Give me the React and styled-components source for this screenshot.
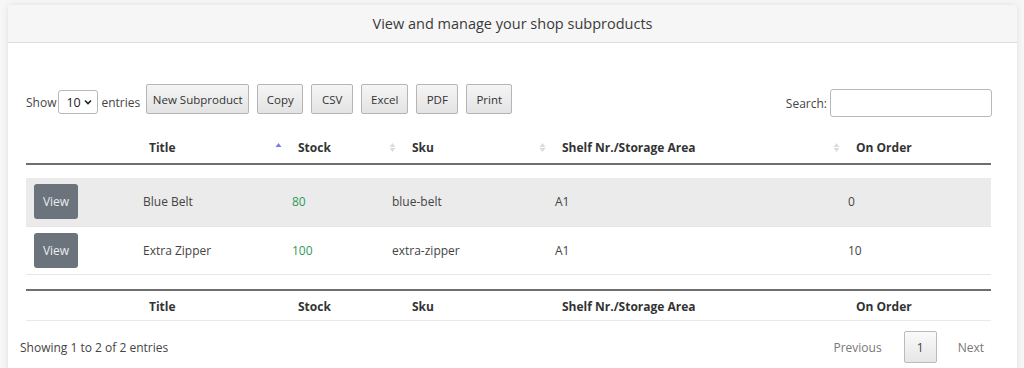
import React from "react";
import styled, { createGlobalStyle } from "styled-components";

const Global = createGlobalStyle`
  html, body { margin: 0; padding: 0; background: #f6f6f6; }
  body { font-family: "Open Sans", "Noto Sans", sans-serif; color: #444; font-size: 12px; }
  * { box-sizing: border-box; }
`;

const Page = styled.div`
  padding: 5px 7px 0 8px;
`;

const Card = styled.section`
  background: #fff;
  border-radius: 4px 4px 0 0;
  box-shadow: 0 0 6px rgba(0, 0, 0, 0.1);
  height: 400px;
`;

const CardHeader = styled.header`
  height: 38px;
  background: #f6f6f6;
  border-bottom: 1px solid #dcdcdc;
  border-radius: 4px 4px 0 0;
  display: flex;
  align-items: center;
  justify-content: center;
  font-size: 14.5px;
  color: #3a3a3a;
`;

const CardBody = styled.div`
  padding: 41px 25px 0 18px;
`;

const Controls = styled.div`
  display: flex;
  align-items: center;
  justify-content: space-between;
  height: 30px;
`;

const Left = styled.div`
  display: flex;
  align-items: center;
`;

const Label = styled.label`
  display: flex;
  align-items: center;
  font-size: 12px;
  color: #444;
  margin-top: ${(p) => p.$offset || 0}px;
`;

const Select = styled.div`
  width: 40px;
  height: 24px;
  border: 1px solid #b8b8b8;
  border-radius: 3px;
  display: flex;
  align-items: center;
  justify-content: space-between;
  padding: 0 5px 0 7px;
  margin: 0 3px 0 2px;
  background: #fff;
  color: #222;
  font-size: 12.5px;
`;

const ButtonGroup = styled.div`
  display: flex;
  gap: 8px;
  margin-left: 6px;
`;

const ToolButton = styled.button`
  width: ${(p) => p.$w}px;
  height: 30px;
  padding: 0;
  border: 1px solid #b5b5b5;
  border-radius: 2px;
  background: linear-gradient(#f5f5f5, #e3e3e3);
  font-family: "Open Sans", "Noto Sans", sans-serif;
  font-size: 11.5px;
  color: #333;
`;

const SearchInput = styled.div`
  width: 162px;
  height: 28px;
  border: 1px solid #b8b8b8;
  border-radius: 3px;
  margin-left: 3px;
  background: #fff;
`;

const TableWrap = styled.div`
  width: 965px;
`;

const Table = styled.table`
  width: 100%;
  border-collapse: collapse;
  table-layout: fixed;
`;

const HeadTable = styled(Table)`
  margin-top: 17px;
  border-bottom: 2px solid #6f6f6f;
`;

const FootTable = styled(Table)`
  margin-top: 14px;
  border-top: 2px solid #6f6f6f;
  border-bottom: 1px solid #e6eaee;
`;

const Th = styled.th`
  text-align: left;
  font-weight: 700;
  color: #333;
  font-size: 12px;
  padding: ${(p) => (p.$foot ? "2px 0 0 7px" : "0 0 0 7px")};
  height: ${(p) => p.$h || 33}px;
`;

const ThInner = styled.div`
  display: flex;
  align-items: center;
  gap: 16px;
  padding-left: ${(p) => (p.$icon ? 0 : 23)}px;
`;

const BodyTable = styled(Table)`
  margin-top: 13px;
`;

const Tr = styled.tr`
  background: ${(p) => (p.$odd ? "#ebebeb" : "#fff")};
  border-bottom: 1px solid #e4e7ea;
`;

const Td = styled.td`
  height: 48px;
  padding: 0 8px;
  font-size: 12px;
  color: ${(p) => (p.$green ? "#2f9a5a" : "#444")};
`;

const ViewButton = styled.button`
  width: 44px;
  height: 35px;
  border: none;
  border-radius: 3px;
  background: #6b737c;
  color: #e9ecef;
  font-family: "Open Sans", "Noto Sans", sans-serif;
  font-size: 12px;
  padding: 0;
`;

const Bottom = styled.div`
  display: flex;
  align-items: center;
  justify-content: space-between;
  margin: 10px 0 0 -6px;
`;

const Info = styled.div`
  font-size: 12px;
  color: #444;
`;

const Pager = styled.div`
  display: flex;
  align-items: center;
  margin-right: 8px;
`;

const PageLink = styled.span`
  font-size: 12px;
  color: #777;
`;

const PageCurrent = styled.span`
  width: 33px;
  height: 32px;
  display: flex;
  align-items: center;
  justify-content: center;
  border: 1px solid #bbb;
  border-radius: 2px;
  background: linear-gradient(#fafafa, #e6e6e6);
  color: #444;
  font-size: 12px;
  margin: 0 21px 0 22px;
`;

const SortIcon = ({ active }) => (
  <svg width="7" height="11" viewBox="0 0 7 11">
    <polygon points="3.5,1 6.5,5 0.5,5" fill={active ? "#7a7ee0" : "#dcdcdc"} />
    {!active && <polygon points="3.5,10 6.5,6 0.5,6" fill="#dcdcdc" />}
  </svg>
);

const Chevron = () => (
  <svg width="8" height="6" viewBox="0 0 8 6">
    <path d="M1 1.5 L4 4.5 L7 1.5" fill="none" stroke="#222" strokeWidth="1.6" />
  </svg>
);

const headCols = [93, 149, 114, 150, 294, 165];
const bodyCols = [109, 149, 100, 163, 293, 151];
const headers = [
  { label: "" },
  { label: "Title" },
  { label: "Stock", sort: "active" },
  { label: "Sku", sort: "both" },
  { label: "Shelf Nr./Storage Area", sort: "both" },
  { label: "On Order", sort: "both" },
];

const rows = [
  { title: "Blue Belt", stock: "80", sku: "blue-belt", shelf: "A1", order: "0" },
  { title: "Extra Zipper", stock: "100", sku: "extra-zipper", shelf: "A1", order: "10" },
];

const buttons = [
  { label: "New Subproduct", w: 103 },
  { label: "Copy", w: 46 },
  { label: "CSV", w: 42 },
  { label: "Excel", w: 47 },
  { label: "PDF", w: 42 },
  { label: "Print", w: 46 },
];

const Cols = ({ widths }) => (
  <colgroup>
    {widths.map((w, i) => (
      <col key={i} style={{ width: w }} />
    ))}
  </colgroup>
);

export default function App() {
  return (
    <>
      <Global />
      <Page>
        <Card>
          <CardHeader>View and manage your shop subproducts</CardHeader>
          <CardBody>
            <Controls>
              <Left>
                <Label $offset={6}>
                  Show
                  <Select>
                    10 <Chevron />
                  </Select>
                  entries
                </Label>
                <ButtonGroup>
                  {buttons.map((b) => (
                    <ToolButton key={b.label} $w={b.w}>
                      {b.label}
                    </ToolButton>
                  ))}
                </ButtonGroup>
              </Left>
              <Label $offset={8}>
                Search:
                <SearchInput />
              </Label>
            </Controls>
            <TableWrap>
              <HeadTable>
                <Cols widths={headCols} />
                <thead>
                  <tr>
                    {headers.map((h, i) => (
                      <Th key={i}>
                        <ThInner $icon={!!h.sort}>
                          {h.sort && <SortIcon active={h.sort === "active"} />}
                          <span>{h.label}</span>
                        </ThInner>
                      </Th>
                    ))}
                  </tr>
                </thead>
              </HeadTable>
              <BodyTable>
                <Cols widths={bodyCols} />
                <tbody>
                  {rows.map((r, i) => (
                    <Tr key={i} $odd={i % 2 === 0}>
                      <Td>
                        <ViewButton>View</ViewButton>
                      </Td>
                      <Td>{r.title}</Td>
                      <Td $green>{r.stock}</Td>
                      <Td>{r.sku}</Td>
                      <Td>{r.shelf}</Td>
                      <Td>{r.order}</Td>
                    </Tr>
                  ))}
                </tbody>
              </BodyTable>
              <FootTable>
                <Cols widths={headCols} />
                <tfoot>
                  <tr>
                    {headers.map((h, i) => (
                      <Th key={i} $h={31} $foot>
                        <ThInner>{h.label}</ThInner>
                      </Th>
                    ))}
                  </tr>
                </tfoot>
              </FootTable>
            </TableWrap>
            <Bottom>
              <Info>Showing 1 to 2 of 2 entries</Info>
              <Pager>
                <PageLink>Previous</PageLink>
                <PageCurrent>1</PageCurrent>
                <PageLink>Next</PageLink>
              </Pager>
            </Bottom>
          </CardBody>
        </Card>
      </Page>
    </>
  );
}
